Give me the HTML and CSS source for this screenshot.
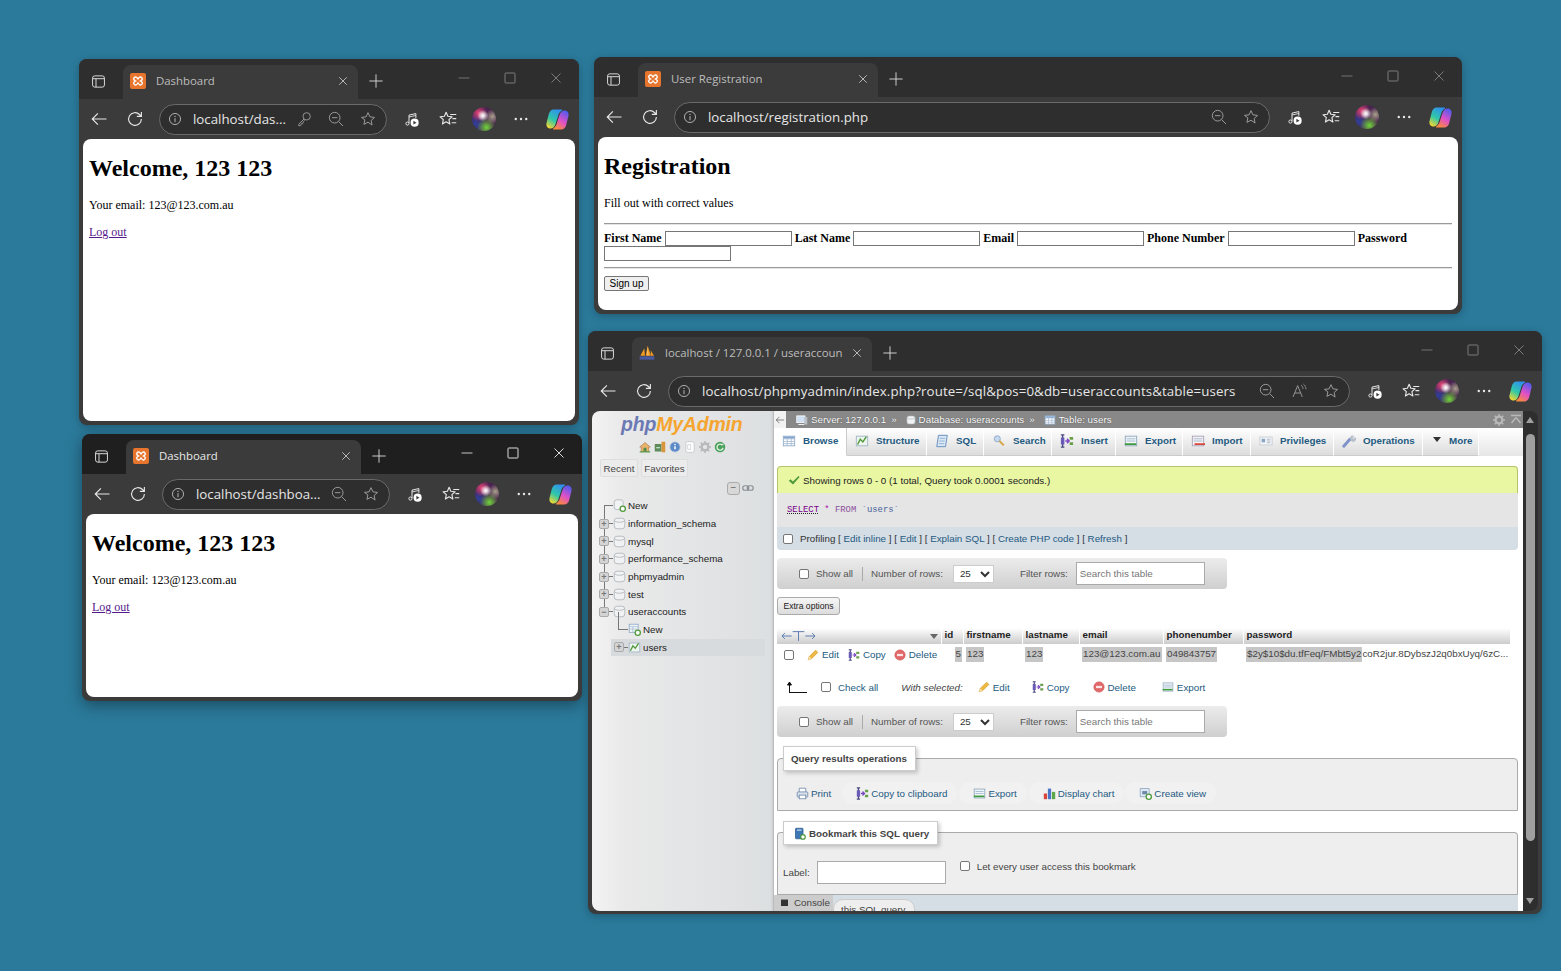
FILE: index.html
```html
<!DOCTYPE html>
<html lang="en">
<head>
    <meta charset="UTF-8">
    <meta name="viewport" content="width=device-width, initial-scale=1.0">
    <title>Desktop windows</title>
    <link rel="stylesheet" href="styles.css">
</head>
<body>
    <svg class="icon-defs" aria-hidden="true">
        <defs>
            <linearGradient id="cpA" x1="0.7" y1="0" x2="0.2" y2="1"><stop offset="0" stop-color="#2f8ff0"/><stop offset=".55" stop-color="#30c8a8"/><stop offset="1" stop-color="#f7d82e"/></linearGradient>
            <linearGradient id="cpB" x1="0.7" y1="0" x2="0.2" y2="1"><stop offset="0" stop-color="#f98a3c"/><stop offset=".45" stop-color="#e050c8"/><stop offset="1" stop-color="#4a5cf0"/></linearGradient>
        </defs>
        <symbol id="i-panes" viewBox="0 0 24 24"><rect x="2.5" y="3" width="19" height="18" rx="3.5" fill="none" stroke="currentColor" stroke-width="1.6"/><path d="M3 7.5h18M8 7.5V21" fill="none" stroke="currentColor" stroke-width="1.6"/></symbol>
        <symbol id="i-plus" viewBox="0 0 24 24"><path d="M12 2v20M2 12h20" stroke="currentColor" stroke-width="1.4"/></symbol>
        <symbol id="i-x" viewBox="0 0 24 24"><path d="M3 3l18 18M21 3L3 21" stroke="currentColor" stroke-width="1.8"/></symbol>
        <symbol id="i-min" viewBox="0 0 24 24"><path d="M1 12h22" stroke="currentColor" stroke-width="1.6"/></symbol>
        <symbol id="i-max" viewBox="0 0 24 24"><rect x="2" y="2" width="20" height="20" rx="1.5" fill="none" stroke="currentColor" stroke-width="1.8"/></symbol>
        <symbol id="i-back" viewBox="0 0 24 24"><path d="M22 12H3M10.5 4.5L3 12l7.5 7.5" fill="none" stroke="currentColor" stroke-width="1.5"/></symbol>
        <symbol id="i-refresh" viewBox="0 0 24 24"><path d="M20.5 12a8.5 8.5 0 1 1-2.5-6l2.5 2.5M20.5 2.5V8.5H14.5" fill="none" stroke="currentColor" stroke-width="1.5"/></symbol>
        <symbol id="i-info" viewBox="0 0 24 24"><circle cx="12" cy="12" r="9.5" fill="none" stroke="currentColor" stroke-width="1.5"/><path d="M12 10.5v7" stroke="currentColor" stroke-width="1.6"/><circle cx="12" cy="7.5" r="1.1" fill="currentColor"/></symbol>
        <symbol id="i-key" viewBox="0 0 24 24"><circle cx="16" cy="8" r="5.5" fill="none" stroke="currentColor" stroke-width="1.4"/><path d="M12 12L4 20v2h3l1-3h2l1-3 2-2" fill="none" stroke="currentColor" stroke-width="1.4"/></symbol>
        <symbol id="i-zoomout" viewBox="0 0 24 24"><circle cx="10" cy="10" r="8" fill="none" stroke="currentColor" stroke-width="1.5"/><path d="M16 16l6.5 6.5M6 10h8" stroke="currentColor" stroke-width="1.5"/></symbol>
        <symbol id="i-star" viewBox="0 0 24 24"><path d="M12 2.5l2.9 6.3 6.9.8-5.1 4.7 1.4 6.8L12 16.800 5.900 20.100l1.400-6.800L2.200 9.600l6.900-.8z" fill="none" stroke="currentColor" stroke-width="1.5" stroke-linejoin="round"/></symbol>
        <symbol id="i-read" viewBox="0 0 24 24"><path d="M3 21L10 4l7 17M5.5 15h9" fill="none" stroke="currentColor" stroke-width="1.4"/><path d="M15 3c2 1.5 3 3.5 3 6M18.5 1.5c2.5 2 4 5 4 8" fill="none" stroke="currentColor" stroke-width="1.2"/></symbol>
        <symbol id="i-music" viewBox="0 0 24 24"><path d="M8 18V5l11-2.500v7" fill="none" stroke="currentColor" stroke-width="1.6"/><path d="M8 8l11-2.500" stroke="currentColor" stroke-width="1.4"/><circle cx="5.500" cy="18.500" r="2.500" fill="none" stroke="currentColor" stroke-width="1.6"/><circle cx="17" cy="17" r="6.500" fill="#fff"/><path d="M15 14l5 3-5 3z" fill="#3b3b3b"/></symbol>
        <symbol id="i-favs" viewBox="0 0 24 24"><path d="M9.500 3l2.300 5.400 5.700.6-4.300 3.900 1.300 5.800-5-3-5 3 1.300-5.800L1.500 9l5.700-.6z" fill="none" stroke="currentColor" stroke-width="1.5" stroke-linejoin="round"/><path d="M15 6h8M18 11.500h5M17 17h6" stroke="currentColor" stroke-width="1.5"/></symbol>
        <symbol id="i-dots" viewBox="0 0 24 24"><circle cx="5" cy="12" r="1.6" fill="currentColor"/><circle cx="12" cy="12" r="1.6" fill="currentColor"/><circle cx="19" cy="12" r="1.6" fill="currentColor"/></symbol>
        <symbol id="i-copilot" viewBox="0 0 24 24"><path d="M8 1.500h8c1.200 0 1 1-.5 2-1.500 1-2.500 3-3 5l-2.500 8c-.8 2.800-2.500 5-5.500 5C1.500 21.500 0 19 .5 16L3 6C3.700 3.500 5.500 1.500 8 1.500z" fill="url(#cpA)"/><path d="M8 1.500h8c1.200 0 1 1-.5 2-1.500 1-2.500 3-3 5l-2.500 8c-.8 2.800-2.500 5-5.500 5C1.500 21.500 0 19 .5 16L3 6C3.700 3.500 5.500 1.500 8 1.500z" fill="url(#cpB)" transform="rotate(180 12 12)"/></symbol>
        <symbol id="i-xampp" viewBox="0 0 24 24"><rect width="24" height="24" rx="3" fill="#e8752d"/><path d="M6 7.500c2-3 4.500-1 6 1.500 1.500-2.500 4-4.500 6-1.500 1.500 2-.5 3.500-2.500 4.500 2 1 4 2.500 2.500 4.500-2 3-4.500 1-6-1.500-1.500 2.500-4 4.500-6 1.500-1.500-2 .5-3.500 2.500-4.500-2-1-4-2.500-2.500-4.500z" fill="none" stroke="#fff" stroke-width="2"/></symbol>
        <symbol id="i-pma" viewBox="0 0 24 24"><path d="M2 16L8 5l1 11zM10 16l3-15 5 15zM18 16l-.5-8 5 8z" fill="#f29a1f"/><path d="M13 1l1 15h-1z" fill="#fff"/><rect x="1" y="17" width="22" height="5" fill="#4b5aa0"/></symbol>

        <symbol id="p-table" viewBox="0 0 16 16"><rect x="1.500" y="2.500" width="13" height="11" fill="#fff" stroke="#8ca6c4"/><path d="M1.500 5.500h13M1.500 8.500h13M1.500 11h13M6 5.500v8M10.500 5.500v8" stroke="#a8bdd4"/><rect x="2" y="3" width="12" height="2" fill="#7ea3cf"/></symbol>
        <symbol id="p-struct" viewBox="0 0 16 16"><rect x="1.500" y="2.500" width="13" height="11" fill="#eef4ee" stroke="#9db4c4"/><path d="M3 12l3-6 3 3 4-6" fill="none" stroke="#4f9a3c" stroke-width="1.600"/></symbol>
        <symbol id="p-sql" viewBox="0 0 16 16"><path d="M4 1.500h10l-2 13H2z" fill="#d9e6f4" stroke="#5b86b8"/><path d="M5.500 5h6M5 8h6M4.500 11h6" stroke="#8fb0d4"/></symbol>
        <symbol id="p-search" viewBox="0 0 16 16"><circle cx="6" cy="5.500" r="3.500" fill="#c6d9ee" stroke="#8ba5c4"/><path d="M8.500 8l5 5" stroke="#d6a84c" stroke-width="2.400"/></symbol>
        <symbol id="p-insert" viewBox="0 0 16 16"><path d="M3 1v14M1 1h4M1 15h4" stroke="#4a4a7a" stroke-width="1.600"/><rect x="1" y="4" width="4" height="8" fill="#6a5ab8"/><path d="M6 8h4M8 5.500L10.500 8 8 10.500" stroke="#7a48c4" stroke-width="1.600" fill="none"/><path d="M11 3.500h4v3h-4zM11 9.500h4v3h-4z" fill="#6aa04a"/></symbol>
        <symbol id="p-export" viewBox="0 0 16 16"><rect x="1.500" y="2.500" width="13" height="11" fill="#f2f6fa" stroke="#8aa4b8"/><path d="M3 5.500h10M3 8h10" stroke="#9ab4cc"/><path d="M1 11.500h13" stroke="#3f9a3c" stroke-width="2"/></symbol>
        <symbol id="p-import" viewBox="0 0 16 16"><rect x="1.500" y="2.500" width="13" height="11" fill="#f8f2f2" stroke="#a4a0b8"/><path d="M3 5.500h10M3 8h10" stroke="#9ab4cc"/><path d="M4 11.500h12" stroke="#d8453c" stroke-width="2"/></symbol>
        <symbol id="p-priv" viewBox="0 0 16 16"><rect x="1" y="3.500" width="14" height="9" fill="#f4f6f8" stroke="#c4ccd4"/><rect x="3" y="5.500" width="4" height="4" fill="#8aa4c4"/><path d="M9 6h4M9 8h4M9 10h4" stroke="#aab4c0"/></symbol>
        <symbol id="p-wrench" viewBox="0 0 16 16"><path d="M2 14l7-8" stroke="#7f93c8" stroke-width="3.400" stroke-linecap="round"/><path d="M9 5a3 3 0 0 1 5-2.500L12 4.500l1 1L15 3.500A3 3 0 0 1 10.500 8z" fill="#b8c0cc"/></symbol>
        <symbol id="p-server" viewBox="0 0 16 16"><rect x="1" y="2.500" width="11" height="9" fill="#cfe0f2" stroke="#fff"/><rect x="11" y="4" width="4" height="10" fill="#b8bfc6"/><path d="M3 14h8" stroke="#eee" stroke-width="1.500"/></symbol>
        <symbol id="p-db" viewBox="0 0 16 16"><rect x="1.500" y="1.500" width="13" height="13" rx="3.500" fill="#f0f2f3" stroke="#aeb3b7"/><path d="M2 5c2.500 2 9.500 2 12 0" stroke="#aeb3b7" fill="none"/></symbol>
        <symbol id="p-dbnew" viewBox="0 0 16 16"><rect x="1.500" y="1" width="11" height="12" rx="3" fill="#f0f2f3" stroke="#aeb3b7"/><circle cx="12" cy="12" r="3.200" fill="#fff" stroke="#4f9a3c" stroke-width="1.600"/></symbol>
        <symbol id="p-tablenew" viewBox="0 0 16 16"><rect x="1.500" y="1.500" width="11" height="10" fill="#f2f6fa" stroke="#8ca6c4"/><path d="M1.500 4.500h11M1.500 7.500h11M6 4.500v7" stroke="#a8bdd4"/><circle cx="12" cy="12" r="3.200" fill="#fff" stroke="#4f9a3c" stroke-width="1.600"/></symbol>
        <symbol id="p-edit" viewBox="0 0 16 16"><path d="M11.500 1.500l3 3L6 13l-4.500 1.500L3 10z" fill="#eeb93e" stroke="#c89320" stroke-width=".8"/><path d="M1.500 14.500L3 10l3 3z" fill="#f6e2b0"/></symbol>
        <symbol id="p-delete" viewBox="0 0 16 16"><circle cx="8" cy="8" r="6.800" fill="#e2686a" stroke="#d05a58"/><rect x="4" y="6.500" width="8" height="3" fill="#fbe4e4"/></symbol>
        <symbol id="p-print" viewBox="0 0 16 16"><path d="M4 6V1.500h8V6" fill="#fff" stroke="#6e88a8"/><rect x="1.500" y="6" width="13" height="6.500" rx="1" fill="#d6e0ea" stroke="#6e88a8"/><rect x="4" y="10" width="8" height="4.500" fill="#fff" stroke="#6e88a8"/></symbol>
        <symbol id="p-chart" viewBox="0 0 16 16"><rect x="1" y="8" width="4" height="7" fill="#d8453c"/><rect x="6" y="2" width="4" height="13" fill="#4a74c8"/><rect x="11" y="6" width="4" height="9" fill="#5aa848"/></symbol>
        <symbol id="p-view" viewBox="0 0 16 16"><rect x="1.500" y="2" width="11" height="10" fill="#dfe8f2" stroke="#8ca6c4"/><rect x="4" y="5" width="6" height="4" fill="#6c88a8"/><circle cx="12" cy="12" r="3.200" fill="#fff" stroke="#4f9a3c" stroke-width="1.600"/></symbol>
        <symbol id="p-bookmark" viewBox="0 0 16 16"><rect x="2" y="1" width="10" height="14" rx="1" fill="#3e78b4" stroke="#2c5a88"/><path d="M4 3.500h6" stroke="#d6e6f4" stroke-width="1.500"/><circle cx="12" cy="12.500" r="3" fill="#fff" stroke="#4f9a3c" stroke-width="1.600"/></symbol>
        <symbol id="p-home" viewBox="0 0 16 16"><path d="M1 8l7-6 7 6h-2v6H3V8z" fill="#e8b46c" stroke="#a8703c" stroke-width=".8"/><rect x="6" y="9" width="4" height="5" fill="#5a8a4a"/><path d="M1 14.500h14" stroke="#5a9a4a" stroke-width="1.500"/></symbol>
        <symbol id="p-exit" viewBox="0 0 16 16"><rect x="1" y="4" width="9" height="10" fill="#5f8a5a"/><rect x="10" y="1" width="5" height="14" fill="#d8953c"/><path d="M3 9h5" stroke="#dfe" stroke-width="1.500"/></symbol>
        <symbol id="p-help" viewBox="0 0 16 16"><circle cx="8" cy="8" r="6.800" fill="#5a8ac8" stroke="#b8c8dc"/><path d="M8 7v4" stroke="#fff" stroke-width="2"/><circle cx="8" cy="4.800" r="1.100" fill="#fff"/></symbol>
        <symbol id="p-doc" viewBox="0 0 16 16"><rect x="2.500" y="1" width="11" height="14" rx="2" fill="#fff" stroke="#bcc2c8"/><rect x="5" y="5" width="4" height="6" fill="none" stroke="#c8ccd0"/></symbol>
        <symbol id="p-gear" viewBox="0 0 16 16"><circle cx="8" cy="8" r="4.500" fill="none" stroke="currentColor" stroke-width="3"/><path d="M8 0v3M8 13v3M0 8h3M13 8h3M2.300 2.300l2.200 2.200M11.500 11.500l2.200 2.200M13.700 2.300l-2.200 2.200M4.500 11.500l-2.200 2.200" stroke="currentColor" stroke-width="2"/></symbol>
        <symbol id="p-reload" viewBox="0 0 16 16"><circle cx="8" cy="8" r="7" fill="#4aa05a"/><path d="M11 5.500A4 4 0 1 0 12 9" fill="none" stroke="#dff2e2" stroke-width="1.800"/><path d="M9.500 5.500h3v-3z" fill="#dff2e2"/></symbol>
        <symbol id="p-link" viewBox="0 0 16 16"><rect x="1" y="5" width="8" height="6" rx="3" fill="none" stroke="#8a8f94" stroke-width="1.600"/><rect x="7" y="5" width="8" height="6" rx="3" fill="none" stroke="#8a8f94" stroke-width="1.600"/></symbol>
        <symbol id="p-check" viewBox="0 0 16 16"><path d="M1 9l2.500-2 3 3L14 2.500l1.500 1.500-8.800 10z" fill="#4f9a3c"/></symbol>
    </svg>

    <!-- first dashboard -->
    <section class="window win-dash-back">
        <div class="tabbar">
            <span class="panes"><svg class="ic15"><use href="#i-panes"/></svg></span>
            <div class="tab"><svg class="fav"><use href="#i-xampp"/></svg><span class="tab-title">Dashboard</span><svg class="tab-x"><use href="#i-x"/></svg></div>
            <span class="newtab"><svg class="ic16"><use href="#i-plus"/></svg></span>
            <div class="controls"><svg><use href="#i-min"/></svg><svg><use href="#i-max"/></svg><svg><use href="#i-x"/></svg></div>
        </div>
        <div class="toolbar">
            <span class="tool"><svg class="ic18"><use href="#i-back"/></svg></span>
            <span class="tool"><svg class="ic18"><use href="#i-refresh"/></svg></span>
            <div class="address">
                <svg class="addr-info"><use href="#i-info"/></svg>
                <span class="url">localhost/das...</span>
                <svg class="addr-ic"><use href="#i-key"/></svg>
                <svg class="addr-ic"><use href="#i-zoomout"/></svg>
                <svg class="addr-ic"><use href="#i-star"/></svg>
            </div>
            <div class="tools-right">
                <span class="tool"><svg class="ic15"><use href="#i-music"/></svg></span>
                <span class="tool"><svg class="ic18"><use href="#i-favs"/></svg></span>
                <span class="tool"><span class="avatar"></span></span>
                <span class="tool"><svg class="ic18"><use href="#i-dots"/></svg></span>
                <span class="tool"><svg class="ic24"><use href="#i-copilot"/></svg></span>
            </div>
        </div>
        <main class="page">
            <h1>Welcome, 123 123</h1>
            <p>Your email: 123@123.com.au</p>
            <p><a href="#">Log out</a></p>
        </main>
    </section>

    <!-- second dashboard, focused -->
    <section class="window win-dash-front">
        <div class="tabbar">
            <span class="panes"><svg class="ic15"><use href="#i-panes"/></svg></span>
            <div class="tab"><svg class="fav"><use href="#i-xampp"/></svg><span class="tab-title">Dashboard</span><svg class="tab-x"><use href="#i-x"/></svg></div>
            <span class="newtab"><svg class="ic16"><use href="#i-plus"/></svg></span>
            <div class="controls"><svg><use href="#i-min"/></svg><svg><use href="#i-max"/></svg><svg><use href="#i-x"/></svg></div>
        </div>
        <div class="toolbar">
            <span class="tool"><svg class="ic18"><use href="#i-back"/></svg></span>
            <span class="tool"><svg class="ic18"><use href="#i-refresh"/></svg></span>
            <div class="address">
                <svg class="addr-info"><use href="#i-info"/></svg>
                <span class="url">localhost/dashboa...</span>
                <svg class="addr-ic"><use href="#i-zoomout"/></svg>
                <svg class="addr-ic"><use href="#i-star"/></svg>
            </div>
            <div class="tools-right">
                <span class="tool"><svg class="ic15"><use href="#i-music"/></svg></span>
                <span class="tool"><svg class="ic18"><use href="#i-favs"/></svg></span>
                <span class="tool"><span class="avatar"></span></span>
                <span class="tool"><svg class="ic18"><use href="#i-dots"/></svg></span>
                <span class="tool"><svg class="ic24"><use href="#i-copilot"/></svg></span>
            </div>
        </div>
        <main class="page">
            <h1>Welcome, 123 123</h1>
            <p>Your email: 123@123.com.au</p>
            <p><a href="#">Log out</a></p>
        </main>
    </section>

    <!-- registration -->
    <section class="window win-register">
        <div class="tabbar">
            <span class="panes"><svg class="ic15"><use href="#i-panes"/></svg></span>
            <div class="tab"><svg class="fav"><use href="#i-xampp"/></svg><span class="tab-title">User Registration</span><svg class="tab-x"><use href="#i-x"/></svg></div>
            <span class="newtab"><svg class="ic16"><use href="#i-plus"/></svg></span>
            <div class="controls"><svg><use href="#i-min"/></svg><svg><use href="#i-max"/></svg><svg><use href="#i-x"/></svg></div>
        </div>
        <div class="toolbar">
            <span class="tool"><svg class="ic18"><use href="#i-back"/></svg></span>
            <span class="tool"><svg class="ic18"><use href="#i-refresh"/></svg></span>
            <div class="address">
                <svg class="addr-info"><use href="#i-info"/></svg>
                <span class="url">localhost/registration.php</span>
                <svg class="addr-ic"><use href="#i-zoomout"/></svg>
                <svg class="addr-ic"><use href="#i-star"/></svg>
            </div>
            <div class="tools-right">
                <span class="tool"><svg class="ic15"><use href="#i-music"/></svg></span>
                <span class="tool"><svg class="ic18"><use href="#i-favs"/></svg></span>
                <span class="tool"><span class="avatar"></span></span>
                <span class="tool"><svg class="ic18"><use href="#i-dots"/></svg></span>
                <span class="tool"><svg class="ic24"><use href="#i-copilot"/></svg></span>
            </div>
        </div>
        <main class="page">
            <h1>Registration</h1>
            <p>Fill out with correct values</p>
            <hr>
            <form class="reg-form">
                <label>First Name</label> <input type="text">
                <label>Last Name</label> <input type="text">
                <label>Email</label> <input type="text">
                <label>Phone Number</label> <input type="text">
                <label>Password</label> <input type="text">
                <hr>
                <button type="button">Sign up</button>
            </form>
        </main>
    </section>

    <!-- phpMyAdmin -->
    <section class="window win-pma">
        <div class="tabbar">
            <span class="panes"><svg class="ic15"><use href="#i-panes"/></svg></span>
            <div class="tab"><svg class="fav"><use href="#i-pma"/></svg><span class="tab-title">localhost / 127.0.0.1 / useraccoun</span><svg class="tab-x"><use href="#i-x"/></svg></div>
            <span class="newtab"><svg class="ic16"><use href="#i-plus"/></svg></span>
            <div class="controls"><svg><use href="#i-min"/></svg><svg><use href="#i-max"/></svg><svg><use href="#i-x"/></svg></div>
        </div>
        <div class="toolbar">
            <span class="tool"><svg class="ic18"><use href="#i-back"/></svg></span>
            <span class="tool"><svg class="ic18"><use href="#i-refresh"/></svg></span>
            <div class="address">
                <svg class="addr-info"><use href="#i-info"/></svg>
                <span class="url">localhost/phpmyadmin/index.php?route=/sql&amp;pos=0&amp;db=useraccounts&amp;table=users</span>
                <svg class="addr-ic"><use href="#i-zoomout"/></svg>
                <svg class="addr-ic"><use href="#i-read"/></svg>
                <svg class="addr-ic"><use href="#i-star"/></svg>
            </div>
            <div class="tools-right">
                <span class="tool"><svg class="ic15"><use href="#i-music"/></svg></span>
                <span class="tool"><svg class="ic18"><use href="#i-favs"/></svg></span>
                <span class="tool"><span class="avatar"></span></span>
                <span class="tool"><svg class="ic18"><use href="#i-dots"/></svg></span>
                <span class="tool"><svg class="ic24"><use href="#i-copilot"/></svg></span>
            </div>
        </div>
        <div class="pma">
            <aside class="pma-side">
                <div class="pma-logo"><span class="logo-php">php</span><span class="logo-my">MyAdmin</span></div>
                <div class="pma-quick">
                    <svg><use href="#p-home"/></svg><svg><use href="#p-exit"/></svg><svg><use href="#p-help"/></svg><svg><use href="#p-doc"/></svg><svg class="quick-gear"><use href="#p-gear"/></svg><svg><use href="#p-reload"/></svg>
                </div>
                <div class="pma-recent"><button type="button" class="btn-recent">Recent</button><button type="button" class="btn-fav">Favorites</button></div>
                <div class="pma-collapse"><span class="collapse-box">&minus;</span><svg><use href="#p-link"/></svg></div>
                <ul class="tree">
                    <li class="tree-new"><span class="tree-dash"></span><svg><use href="#p-dbnew"/></svg><a>New</a></li>
                    <li><span class="exp">+</span><span class="tree-tick"></span><svg><use href="#p-db"/></svg><a>information_schema</a></li>
                    <li><span class="exp">+</span><span class="tree-tick"></span><svg><use href="#p-db"/></svg><a>mysql</a></li>
                    <li><span class="exp">+</span><span class="tree-tick"></span><svg><use href="#p-db"/></svg><a>performance_schema</a></li>
                    <li><span class="exp">+</span><span class="tree-tick"></span><svg><use href="#p-db"/></svg><a>phpmyadmin</a></li>
                    <li><span class="exp">+</span><span class="tree-tick"></span><svg><use href="#p-db"/></svg><a>test</a></li>
                    <li><span class="exp">&minus;</span><span class="tree-tick"></span><svg><use href="#p-db"/></svg><a>useraccounts</a></li>
                    <li class="tree-sub tree-sub-new"><span class="tree-dash"></span><svg><use href="#p-tablenew"/></svg><a>New</a></li>
                    <li class="tree-sub tree-current"><span class="exp">+</span><span class="tree-tick"></span><svg><use href="#p-struct"/></svg><a>users</a></li>
                </ul>
            </aside>
            <div class="pma-main">
                <div class="crumbs">
                    <span class="crumb-back"><svg class="ic10"><use href="#i-back"/></svg></span>
                    <svg class="ic12"><use href="#p-server"/></svg><span>Server: 127.0.0.1</span><span class="crumb-sep">&raquo;</span>
                    <svg class="ic10"><use href="#p-db"/></svg><span>Database: useraccounts</span><span class="crumb-sep">&raquo;</span>
                    <svg class="ic12"><use href="#p-table"/></svg><span>Table: users</span>
                    <span class="crumb-right"><svg class="ic12"><use href="#p-gear"/></svg><svg class="ic12" viewBox="0 0 12 12"><path d="M1 1.500h10M6 3.500L1.500 9M6 3.500L10.500 9" fill="none" stroke="currentColor" stroke-width="1.500"/></svg></span>
                </div>
                <nav class="pma-tabs">
                    <a class="active t-browse"><svg><use href="#p-table"/></svg>Browse</a>
                    <a class="t-structure"><svg><use href="#p-struct"/></svg>Structure</a>
                    <a class="t-sql"><svg><use href="#p-sql"/></svg>SQL</a>
                    <a class="t-search"><svg><use href="#p-search"/></svg>Search</a>
                    <a class="t-insert"><svg><use href="#p-insert"/></svg>Insert</a>
                    <a class="t-export"><svg><use href="#p-export"/></svg>Export</a>
                    <a class="t-import"><svg><use href="#p-import"/></svg>Import</a>
                    <a class="t-priv"><svg><use href="#p-priv"/></svg>Privileges</a>
                    <a class="t-ops"><svg><use href="#p-wrench"/></svg>Operations</a>
                    <a class="t-more"><span class="more-arrow"></span>More</a>
                </nav>
                <div class="pma-body">
                    <div class="notice"><svg><use href="#p-check"/></svg>Showing rows 0 - 0 (1 total, Query took 0.0001 seconds.)</div>
                    <div class="sql-box"><span class="kw">SELECT</span> <span class="star">*</span> <span class="from">FROM</span> <span class="tbl">`users`</span></div>
                    <div class="profiling"><input type="checkbox" class="chk"><span>Profiling [ <a>Edit inline</a> ] [ <a>Edit</a> ] [ <a>Explain SQL</a> ] [ <a>Create PHP code</a> ] [ <a>Refresh</a> ]</span></div>

                    <div class="rows-bar">
                        <input type="checkbox" class="chk"><span class="show-all">Show all</span>
                        <span class="rows-label">Number of rows:</span>
                        <select><option>25</option></select>
                        <span class="filter-label">Filter rows:</span>
                        <input type="text" class="pma-input" placeholder="Search this table">
                    </div>

                    <button type="button" class="extra">Extra options</button>

                    <div class="results">
                        <div class="results-head">
                            <div class="head-tools"><span class="lr"><svg viewBox="0 0 36 12"><path d="M11 6H1M4 3L1 6l3 3M25 6h10M32 3l3 3-3 3M12 1.500h12M18 1.500V11" fill="none" stroke="#5a7ab0"/></svg></span><span class="sort-arrow"></span></div>
                            <div>id</div><div>firstname</div><div>lastname</div><div>email</div><div>phonenumber</div><div>password</div>
                        </div>
                        <div class="results-row">
                            <div class="row-tools">
                                <input type="checkbox" class="chk">
                                <a class="row-edit"><svg><use href="#p-edit"/></svg>Edit</a>
                                <a class="row-copy"><svg><use href="#p-insert"/></svg>Copy</a>
                                <a class="row-del"><svg><use href="#p-delete"/></svg>Delete</a>
                            </div>
                            <div class="num"><mark>5</mark></div><div><mark>123</mark></div><div><mark>123</mark></div><div><mark>123@123.com.au</mark></div><div><mark>049843757</mark></div>
                            <div class="pass"><mark>$2y$10$du.tfFeq/FMbt5y2</mark>coR2jur.8DybszJ2q0bxUyq/6zC...</div>
                        </div>
                    </div>

                    <div class="with-selected">
                        <svg class="arrow-up" viewBox="0 0 20 12"><path d="M2.500 12V2M.5 4l2-3 2 3zM2.500 11.500H20" fill="#111" stroke="#111"/></svg>
                        <input type="checkbox" class="chk"><a class="check-all">Check all</a>
                        <em>With selected:</em>
                        <a class="ws-edit"><svg><use href="#p-edit"/></svg>Edit</a>
                        <a class="ws-copy"><svg><use href="#p-insert"/></svg>Copy</a>
                        <a class="ws-del"><svg><use href="#p-delete"/></svg>Delete</a>
                        <a class="ws-exp"><svg><use href="#p-export"/></svg>Export</a>
                    </div>

                    <div class="rows-bar rows-bar-two">
                        <input type="checkbox" class="chk"><span class="show-all">Show all</span>
                        <span class="rows-label">Number of rows:</span>
                        <select><option>25</option></select>
                        <span class="filter-label">Filter rows:</span>
                        <input type="text" class="pma-input" placeholder="Search this table">
                    </div>

                    <div class="fieldset ops">
                        <div class="legend">Query results operations</div>
                        <div class="ops-links">
                            <a class="op-print"><svg><use href="#p-print"/></svg>Print</a>
                            <a class="op-copy"><svg><use href="#p-insert"/></svg>Copy to clipboard</a>
                            <a class="op-export"><svg><use href="#p-export"/></svg>Export</a>
                            <a class="op-chart"><svg><use href="#p-chart"/></svg>Display chart</a>
                            <a class="op-view"><svg><use href="#p-view"/></svg>Create view</a>
                        </div>
                    </div>

                    <div class="fieldset bookmark">
                        <div class="legend"><svg><use href="#p-bookmark"/></svg>Bookmark this SQL query</div>
                        <div class="bookmark-row">
                            <label>Label:</label><input type="text" class="pma-input">
                            <input type="checkbox" class="chk"><span>Let every user access this bookmark</span>
                        </div>
                    </div>
                    <div class="fieldset-foot"><span class="foot-btn">this SQL query</span></div>
                </div>
                <div class="console"><span class="console-ic"></span>Console</div>
            </div>
            <div class="pma-scroll"><span class="up"></span><span class="thumb"></span><span class="down"></span></div>
        </div>
    </section>
</body>
</html>
```

FILE: styles.css
```css
body {
    margin: 0;
    height: 971px;
    overflow: hidden;
    background-color: #2b7a9b;
    font-family: "Liberation Serif", serif;
}

.icon-defs {
    position: absolute;
    width: 0;
    height: 0;
}

/* browser windows */
.window {
    position: absolute;
    display: flex;
    flex-direction: column;
    box-sizing: border-box;
    background-color: #3b3b3b;
    border-radius: 8px;
    color: #e8e8e8;
    box-shadow: 0 2px 8px rgba(0, 0, 0, 0.25);
    font-family: "Open Sans", sans-serif;
}

.win-dash-back { left: 79px; top: 59px; width: 500px; height: 366px; }
.win-dash-front { left: 82px; top: 434px; width: 500px; height: 267px; box-shadow: 0 4px 16px rgba(0, 0, 0, 0.4); }
.win-register { left: 594px; top: 57px; width: 868px; height: 257px; }
.win-pma { left: 588px; top: 331px; width: 954px; height: 583px; }

.tabbar {
    display: flex;
    height: 40px;
    flex: none;
    background-color: #2e2e2e;
    border-radius: 8px 8px 0 0;
}

.win-dash-front .tabbar {
    background-color: #1f1f1f;
}

.panes {
    display: flex;
    width: 44px;
    height: 40px;
    align-items: center;
    justify-content: center;
    padding: 4px 6px 0 0;
    box-sizing: border-box;
    color: #d8d8d8;
}

.tab {
    display: flex;
    align-items: center;
    width: 235px;
    height: 34px;
    margin-top: 6px;
    box-sizing: border-box;
    padding: 0 8px 2px 7px;
    background-color: #3b3b3b;
    border-radius: 8px 8px 0 0;
    font-size: 11.4px;
    color: #bdbdbd;
}

.win-dash-front .tab { color: #e8e8e8; }
.win-register .tab, .win-pma .tab { width: 240px; }

.fav {
    width: 16px;
    height: 16px;
    flex: none;
}

.tab-title {
    flex: 1;
    margin: 0 0 1px 10px;
    white-space: nowrap;
}

.tab-x {
    width: 10px;
    height: 10px;
    margin: 0 2px 0 8px;
    flex: none;
    color: #e0e0e0;
}

.newtab {
    display: flex;
    width: 36px;
    align-items: center;
    justify-content: center;
    padding-top: 3px;
    color: #d8d8d8;
}

.controls {
    display: flex;
    margin-left: auto;
    color: #858585;
}

.win-dash-front .controls { color: #f0f0f0; }

.controls svg {
    width: 12px;
    height: 12px;
    padding: 13px 17px 15px;
}

.ic10 { width: 10px; height: 10px; }
.ic12 { width: 12px; height: 12px; }
.ic15 { width: 15px; height: 15px; }
.ic16 { width: 16px; height: 16px; }
.ic18 { width: 18px; height: 18px; }
.ic24 { width: 23px; height: 23px; }

.toolbar {
    display: flex;
    align-items: center;
    height: 40px;
    flex: none;
    padding: 0 4px 0 2px;
    color: #e8e8e8;
}

.tool {
    display: flex;
    width: 36px;
    height: 36px;
    flex: none;
    align-items: center;
    justify-content: center;
}

.address {
    display: flex;
    flex: 1;
    align-items: center;
    min-width: 0;
    height: 31px;
    margin: 0 6px;
    box-sizing: border-box;
    padding: 0 10px 0 8px;
    border: 1px solid #6a6a6a;
    border-radius: 16px;
    background-color: #2e2e2e;
}

.addr-info {
    width: 14px;
    height: 14px;
    flex: none;
    color: #c0c0c0;
}

.url {
    flex: 1;
    min-width: 0;
    margin: 0 0 1px 11px;
    white-space: nowrap;
    font-size: 13.3px;
    color: #e6e6e6;
}

.win-pma .url { letter-spacing: 0.1px; }

.addr-ic {
    width: 16px;
    height: 16px;
    margin-left: 16px;
    flex: none;
    color: #9a9a9a;
}

.tools-right {
    display: flex;
    gap: 0.5px;
}

.avatar {
    width: 24px;
    height: 24px;
    border-radius: 50%;
    background:
        radial-gradient(circle at 45% 36%, #fff 0, rgba(255, 255, 255, 0.75) 10%, transparent 28%),
        radial-gradient(circle at 60% 85%, #6fd43a 0, transparent 38%),
        radial-gradient(circle at 28% 25%, #e8457a 0, transparent 34%),
        radial-gradient(circle at 85% 40%, #a8a08a 0, transparent 30%),
        radial-gradient(circle at 15% 70%, #2f3f9a, transparent 40%),
        #4a2450;
}

/* plain pages, rendered at 75% */
.page {
    flex: 1;
    margin: 0 4px 4px;
    padding: 1px 6px;
    overflow: hidden;
    background-color: #fff;
    border-radius: 8px;
    color: #000;
    font-family: "Liberation Serif", serif;
    font-size: 12px;
    line-height: 14px;
}

.page h1 {
    margin: 15px 0 16px;
    font-size: 24px;
    line-height: 27px;
}

.page p {
    margin: 12px 0 13px;
}

.page a {
    color: #551a8b;
    text-decoration: underline;
}

.page hr {
    margin: 6px 0;
    border: 0;
    border-top: 1px solid #9a9a9a;
    border-bottom: 1px solid #e4e4e4;
}

.reg-form {
    line-height: 15px;
}

.reg-form label {
    font-weight: bold;
}

.reg-form input {
    width: 127px;
    height: 15px;
    box-sizing: border-box;
    margin: 0;
    padding: 0;
    border: 1px solid #767676;
    font-size: 10px;
    line-height: normal;
}

.reg-form button {
    display: block;
    height: 15px;
    width: 45px;
    margin-top: 7px;
    padding: 0;
    border: 1px solid #767676;
    border-radius: 2px;
    background-color: #efefef;
    font-family: "Liberation Sans", sans-serif;
    font-size: 10px;
    line-height: 12px;
}

/* phpMyAdmin */
.pma {
    display: flex;
    flex: 1;
    min-height: 0;
    margin: 0 4px 3px;
    overflow: hidden;
    border-radius: 8px;
    font-family: "Liberation Sans", sans-serif;
    font-size: 9.8px;
    color: #444;
}

.pma a { color: #235a81; }

.pma-side {
    width: 182px;
    flex: none;
    box-sizing: border-box;
    border-right: 1px solid #bbb;
    background: linear-gradient(90deg, #f3f3f3 0, #e9e9e9 18%, #dcdfe1 100%);
    box-shadow: inset -3px 0 3px -2px rgba(0, 0, 0, 0.08);
}

.pma-logo {
    height: 26px;
    margin-left: 29px;
    font-size: 19.5px;
    font-style: italic;
    font-weight: bold;
    line-height: 26px;
    letter-spacing: -0.2px;
}

.logo-php { color: #6b79b4; }
.logo-my { color: #f5a530; }

.pma-quick {
    display: flex;
    gap: 3px;
    height: 14px;
    margin: 4px 0 0 47px;
}

.pma-quick svg {
    width: 12px;
    height: 12px;
}

.quick-gear { color: #b8b8b8; }

.pma-recent {
    display: flex;
    gap: 3px;
    margin: 4px 0 0 8px;
}

.pma-recent button {
    height: 18px;
    padding: 0;
    border: 1px solid #ddd;
    border-radius: 2px;
    background-color: #ececec;
    color: #444;
    font-family: "Liberation Sans", sans-serif;
    font-size: 9.8px;
}

.btn-recent { width: 38px; }
.btn-fav { width: 47px; }

.pma-collapse {
    display: flex;
    justify-content: flex-end;
    align-items: center;
    gap: 2px;
    height: 12px;
    margin: 5px 19px 0 0;
}

.pma-collapse svg {
    width: 12px;
    height: 12px;
}

.collapse-box {
    width: 11px;
    height: 11px;
    border: 1px solid #aaa;
    border-radius: 3px;
    background-color: #d8d8d8;
    text-align: center;
    font-size: 10px;
    line-height: 10px;
    color: #666;
}

.tree {
    position: relative;
    margin: 3px 0 0;
    padding: 0 0 0 7px;
    list-style: none;
}

/* tree guide lines */
.tree::before {
    content: "";
    position: absolute;
    left: 12px;
    top: 9px;
    height: 106px;
    border-left: 1px solid #777;
}

.tree li {
    display: flex;
    position: relative;
    align-items: center;
    height: 17.7px;
}

.tree li a {
    margin-left: 2px;
    color: #222;
}

.tree svg {
    width: 13px;
    height: 13px;
    flex: none;
}

.exp {
    position: relative;
    width: 8px;
    height: 8px;
    flex: none;
    border: 1px solid #aaa;
    border-radius: 2px;
    background-color: #d4d4d4;
    text-align: center;
    font-size: 9px;
    font-weight: bold;
    line-height: 8px;
    color: #777;
}

.tree-tick {
    width: 4px;
    flex: none;
    border-top: 1px solid #777;
}

.tree-dash {
    width: 9px;
    margin-left: 5px;
    flex: none;
    border-top: 1px solid #777;
}

.tree-sub { margin-left: 12px; }

.tree-sub-new::before {
    content: "";
    position: absolute;
    left: 7px;
    top: -9px;
    height: 18px;
    border-left: 1px solid #777;
}

.tree-sub-new .tree-dash { margin-left: 8px; width: 9px; }
.tree-current .exp { margin-left: 3px; }
.tree-current { background-color: #d8dbdd; width: 154px; }
.tree li.tree-current a { margin-left: 2px; }
.tree li.tree-sub-new a { margin-left: 2px; }

.pma-main {
    position: relative;
    width: 749px;
    flex: none;
    overflow: hidden;
    background-color: #fff;
}

.crumbs {
    display: flex;
    align-items: center;
    gap: 3px;
    height: 17px;
    background-color: #888;
    color: #fff;
    text-shadow: 0 0 1px #333;
}

.crumb-back {
    display: flex;
    width: 12px;
    height: 17px;
    margin-right: 7px;
    align-items: center;
    justify-content: center;
    background-color: #f2f2f2;
    color: #444;
}

.crumb-sep {
    margin: 0 6px 0 2px;
}

.crumb-right {
    display: flex;
    gap: 5px;
    margin-left: auto;
    margin-right: 1px;
    color: #b8b8b8;
}

.pma-tabs {
    display: flex;
    height: 28px;
    background: linear-gradient(#fff, #e6e6e6);
    font-weight: bold;
}

.pma-tabs a {
    display: flex;
    align-items: center;
    box-sizing: border-box;
    height: 28px;
    padding: 0 0 2px 8px;
    border-right: 1px solid #fff;
    border-bottom: 1px solid #ccc;
    background: linear-gradient(#fff, #dcdcdc);
    white-space: nowrap;
}

.pma-tabs svg {
    width: 14px;
    height: 14px;
    margin-right: 7px;
}

.pma-tabs a.active {
    background: #fff;
    border-bottom-color: #fff;
    border-right-color: #ccc;
}

.t-browse { width: 73px; }
.t-structure { width: 80px; }
.t-sql { width: 57px; }
.t-search { width: 68px; }
.t-insert { width: 64px; }
.t-export { width: 67px; }
.t-import { width: 68px; }
.t-priv { width: 83px; }
.t-ops { width: 89px; }
.t-more { width: 56px; }

.more-arrow {
    width: 0;
    height: 0;
    margin: 0 8px 2px 2px;
    border: 4px solid transparent;
    border-top: 5px solid #333;
    border-bottom: 0;
}

.pma-body {
    padding: 10px 5px 0 3px;
}

.chk {
    appearance: none;
    width: 10px;
    height: 10px;
    box-sizing: border-box;
    margin: 0;
    flex: none;
    border: 1px solid #767676;
    border-radius: 2px;
    background-color: #fff;
}

.notice {
    display: flex;
    align-items: center;
    height: 27px;
    box-sizing: border-box;
    padding-left: 10px;
    border: 1px solid #b5c46c;
    border-bottom: 0;
    border-radius: 4px 4px 0 0;
    background-color: #e9f7a2;
    color: #222;
}

.notice svg {
    width: 12px;
    height: 12px;
    margin-right: 3px;
}

.sql-box {
    height: 34px;
    box-sizing: border-box;
    padding: 10px 0 0 10px;
    background-color: #e5e5e5;
    font-family: "Liberation Mono", monospace;
    font-size: 8.9px;
    line-height: 15px;
    white-space: pre;
}

.kw {
    color: #770088;
    text-decoration: underline dotted #222;
}

.star { color: #aa22aa; }
.from { color: #8a4f9a; }
.tbl { color: #44609a; }

.profiling {
    display: flex;
    align-items: center;
    height: 23px;
    box-sizing: border-box;
    padding-left: 6px;
    border-radius: 0 0 4px 4px;
    background-color: #d5dde5;
    color: #333;
}

.profiling .chk { margin-right: 7px; }

.rows-bar {
    display: flex;
    align-items: center;
    width: 450px;
    height: 31px;
    box-sizing: border-box;
    margin-top: 8px;
    padding-left: 22px;
    border-radius: 4px;
    background: linear-gradient(#ececec, #cfcfcf);
    color: #555;
}

.show-all {
    margin-left: 7px;
    padding-right: 9px;
    border-right: 1px solid #aaa;
    line-height: 14px;
}

.rows-label { margin-left: 8px; }

.rows-bar select {
    width: 41px;
    height: 18px;
    margin-left: 10px;
    padding-left: 2px;
    border: 1px solid #ccc;
    background-color: #fff;
    font-family: "Liberation Sans", sans-serif;
    font-size: 9.8px;
    color: #333;
}

.filter-label { margin-left: 26px; }

.pma-input {
    box-sizing: border-box;
    width: 129px;
    height: 23px;
    margin: 0 0 0 8px;
    padding: 0 3px;
    border: 1px solid #aaa;
    background-color: #fff;
    font-family: "Liberation Sans", sans-serif;
    font-size: 9.8px;
}

.pma-input::placeholder { color: #777; }

.extra {
    display: block;
    height: 18px;
    width: 63px;
    margin-top: 8px;
    padding: 0;
    border: 1px solid #aaa;
    border-radius: 3px;
    background: linear-gradient(#f6f6f6, #dcdcdc);
    color: #222;
    font-family: "Liberation Sans", sans-serif;
    font-size: 8.6px;
}

.results { margin-top: 13px; width: 733px; }

.results-head, .results-row {
    display: grid;
    grid-template-columns: 164px 22px 59px 57px 84px 80px 267px;
}

.results-head {
    height: 16px;
    color: #222;
    font-weight: bold;
    line-height: 13px;
}

.results-head > div {
    padding-left: 2.5px;
    border-left: 1px solid #fff;
    background: linear-gradient(#fff, #ccc);
}

.results-head > .head-tools {
    display: flex;
    align-items: center;
    padding: 0 0 0 4px;
    border: 0;
}

.lr svg {
    display: block;
    width: 35px;
    height: 12px;
}

.sort-arrow {
    width: 0;
    height: 0;
    margin-left: auto;
    margin-right: 3px;
    border: 4.5px solid transparent;
    border-top: 5px solid #666;
    border-bottom: 0;
}

.results-row {
    height: 21px;
    align-items: center;
    color: #444;
}

.results-row > div {
    padding-left: 3px;
    white-space: nowrap;
}

.results-row > .num { text-align: right; padding-right: 1px; padding-left: 0; }

.results-row > .row-tools {
    display: flex;
    align-items: center;
    padding-left: 7px;
}

.results-row a, .with-selected a, .ops-links a {
    display: flex;
    align-items: center;
}

.results-row svg, .with-selected a svg {
    width: 12px;
    height: 12px;
    margin-right: 3px;
}

.row-edit { margin-left: 13px; }
.row-copy { margin-left: 9px; }
.row-del { margin-left: 8px; }

mark {
    display: inline-block;
    height: 15px;
    padding: 0 1px;
    background-color: #c6c6c6;
    color: #444;
    line-height: 14px;
}

.with-selected {
    display: flex;
    align-items: center;
    height: 22px;
    margin-top: 11px;
}

.arrow-up {
    width: 20px;
    height: 12px;
    margin-left: 10px;
}

.with-selected .chk { margin-left: 14px; }
.check-all { margin-left: 7px; }

.with-selected em { margin-left: 23px; }
.ws-edit { margin-left: 15px; }
.ws-copy { margin-left: 22px; }
.ws-del { margin-left: 23px; }
.ws-exp { margin-left: 26px; }

.rows-bar-two { margin-top: 8px; }

.fieldset {
    position: relative;
    box-sizing: border-box;
    border: 1px solid #aaa;
    border-radius: 4px 4px 0 0;
    background-color: #eee;
    color: #444;
}

.ops { height: 53px; margin-top: 21px; }
.bookmark { height: 62px; margin-top: 21px; border-bottom: 0; }

.legend {
    position: absolute;
    left: 5px;
    top: -13px;
    display: flex;
    align-items: center;
    height: 25px;
    box-sizing: border-box;
    padding: 0 8px 0 7px;
    border: 1px solid #ccc;
    background-color: #fff;
    box-shadow: 2px 2px 4px rgba(0, 0, 0, 0.2);
    font-weight: bold;
    white-space: nowrap;
}

.bookmark .legend { top: -12px; height: 24px; padding: 0 8px 0 10px; }

.legend svg {
    width: 12px;
    height: 13px;
    margin-right: 3px;
}

.ops-links {
    display: flex;
    align-items: center;
    height: 22px;
    padding: 23px 0 0 18px;
}

.ops-links a {
    height: 22px;
    padding: 0 10px 0 14px;
    border-radius: 11px;
    background-color: #f1f1f1;
}

.ops-links a.op-print {
    padding: 0 11px 0 0;
    background: none;
}

.ops-links svg {
    width: 13px;
    height: 13px;
    margin-right: 2px;
}

.op-export { margin-left: 2px; }
.op-chart { margin-left: 2px; }
.op-view { margin-left: 1px; }

.bookmark-row {
    display: flex;
    align-items: flex-start;
    padding: 28px 0 0 5px;
}

.bookmark-row label { margin-top: 6px; }

.bookmark-row .pma-input { width: 129px; margin-left: 7px; }
.bookmark-row .chk { margin-left: 14px; }
.bookmark-row span { margin-left: 7px; }

.fieldset-foot {
    position: relative;
    height: 16px;
    border-top: 1px solid #aaa;
    background-color: #d5dde5;
}

.foot-btn {
    position: absolute;
    left: 56px;
    top: 4px;
    height: 20px;
    padding: 4px 9px 0 7px;
    border: 1px solid #ccc;
    border-radius: 10px 10px 0 0;
    background-color: #eee;
    white-space: nowrap;
}

.console {
    position: absolute;
    left: 0;
    bottom: 0;
    display: flex;
    align-items: center;
    width: 59px;
    height: 16px;
    box-sizing: border-box;
    padding: 0 0 2px 7px;
    background-color: #ccc;
    color: #444;
}

.console-ic {
    width: 7px;
    height: 6px;
    margin-right: 6px;
    background-color: #333;
    border-top: 1px solid #888;
}

.pma-scroll {
    position: relative;
    flex: 1;
    background-color: #2e2e2e;
}

.pma-scroll .thumb {
    position: absolute;
    left: 3px;
    right: 3px;
    top: 23px;
    height: 407px;
    border-radius: 5px;
    background-color: #9f9f9f;
}

.pma-scroll .up, .pma-scroll .down {
    position: absolute;
    left: 3px;
    width: 0;
    height: 0;
    border: 4.5px solid transparent;
}

.pma-scroll .up { top: 6px; border-top: 0; border-bottom: 6px solid #9f9f9f; }
.pma-scroll .down { bottom: 7px; border-bottom: 0; border-top: 6px solid #9f9f9f; }
```
